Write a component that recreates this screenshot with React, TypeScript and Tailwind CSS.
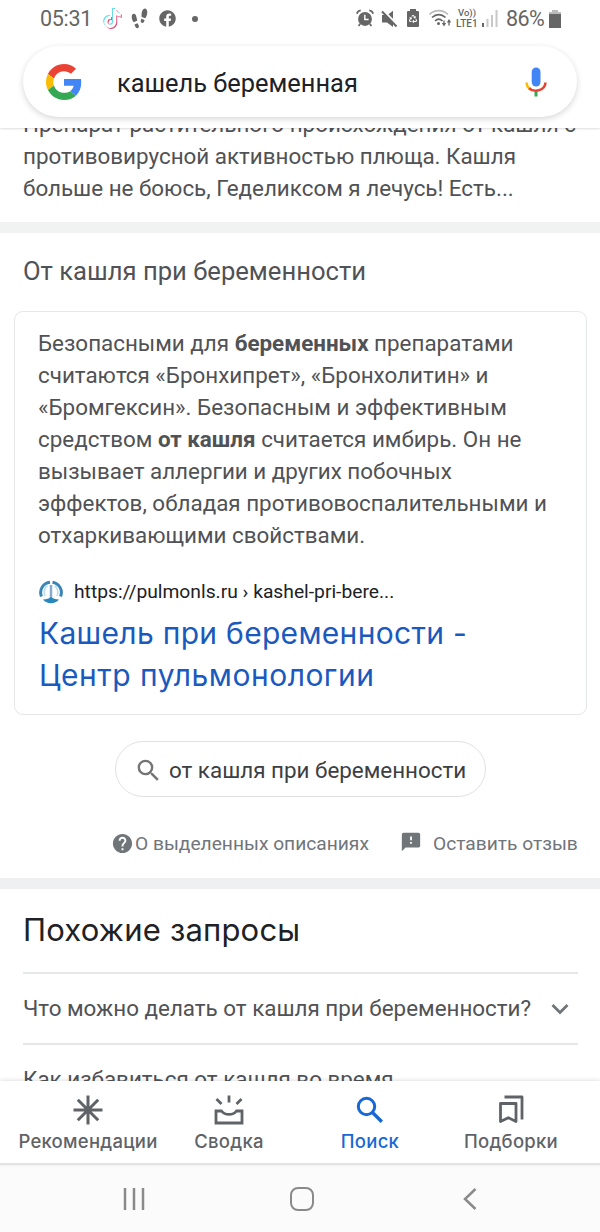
import React from 'react';
import { FaFacebook, FaRecycle, FaTiktok } from 'react-icons/fa';
import { MdFeedback, MdHelp, MdSearch } from 'react-icons/md';

const RELATED = ['Что можно делать от кашля при беременности?', 'Как избавиться от кашля во время'];

export default function App() {
  return (
    <div className="flex h-[1232px] w-[600px] flex-col overflow-hidden bg-white font-['Roboto',sans-serif] text-[#505255]">
      <Header />
      <main className="flex min-h-0 flex-1 flex-col overflow-hidden">
        <p className="-mt-5 h-[114px] shrink-0 whitespace-nowrap pl-[23px] text-[22.4px] leading-8">
          <span className="block">Препарат растительного происхождения от кашля с</span>
          <span className="block">противовирусной активностью плюща. Кашля</span>
          <span className="block">больше не боюсь, Геделиксом я лечусь! Есть...</span>
        </p>
        <div className="h-[11px] shrink-0 bg-[#f1f2f2]" />
        <FeaturedSnippet />
        <div className="h-[11px] shrink-0 bg-[#eff0f2]" />
        <RelatedSearches />
      </main>
      <TabBar />
      <SystemNav />
    </div>
  );
}

const Header = () => (
  <header className="relative z-10 h-32 shrink-0 bg-white shadow-[0_1px_2px_rgba(0,0,0,0.14)]">
    <StatusBar />
    <div className="mx-[23px] mt-2 flex h-[71px] items-center rounded-full bg-white pl-[23px] pr-[30px] shadow-[0_2px_6px_rgba(0,0,0,0.16)]">
      <GoogleLogo />
      <span className="ml-[35px] flex-1 whitespace-nowrap pt-[2px] text-[25.4px] leading-8 text-[#202124]">кашель беременная</span>
      <MicIcon />
    </div>
  </header>
);

const StatusBar = () => (
  <div className="flex h-[38px] items-center pb-px pl-10 pr-[39px] text-[#666]">
    <span className="w-[62px] whitespace-nowrap pt-px text-[21.5px] leading-6 tracking-[-0.3px]">05:31</span>
    <TikTokIcon />
    <Footprints />
    <FaFacebook className="ml-[11px] size-[17px]" />
    <span className="ml-[16px] size-[6px] rounded-full bg-[#666]" />
    <div className="ml-auto flex items-center">
      <AlarmIcon />
      <MutedIcon />
      <RecycleBattery />
      <WifiIcon />
      <div className="ml-[4px] flex w-[24px] flex-col text-[9.5px] font-medium leading-[10px]">
        <span className="pl-[2px]">Vo))</span>
        <span className="whitespace-nowrap text-[10px] leading-[12px]">LTE1</span>
      </div>
      <SignalIcon />
      <span className="ml-2 w-[43px] whitespace-nowrap pt-px text-[21.5px] leading-6 tracking-[-0.6px]">86%</span>
      <svg className="h-[18px] w-[12px]" viewBox="0 0 12 18" fill="currentColor">
        <path d="M3 0h6v2h3v2H0V2h3z" fill="#bbb" />
        <path d="M0 4h12v14H0z" />
      </svg>
    </div>
  </div>
);

const TikTokIcon = () => (
  <span className="relative h-[22px] w-5 shrink-0">
    <FaTiktok className="absolute left-0 top-0 size-[19px] text-[#69dfe3]" />
    <FaTiktok className="absolute left-[1.5px] top-[2px] size-[19px] text-[#e0527a]" />
    <FaTiktok className="absolute left-[0.8px] top-[1px] size-[19px] text-white" />
  </span>
);

const Footprints = () => (
  <svg className="ml-[9px] h-[21px] w-[17px]" viewBox="0 0 17 21" fill="currentColor">
    <path d="M.8 8C1 5.500 4 5 5 7.500l1.300 5-3.500 1.800C1.300 12.500.5 10.500.8 8z" />
    <path d="M3.500 16.500l3-1.300c1.800 2.300 1.800 4.200.4 4.900-1.300.7-2.700-.9-3.400-3.600z" />
    <path d="M16.200 3.500C15.900.3 13.700-.2 12.300 1.200 10.900 2.700 10.500 5 10.500 7.500l.2 1.500 3.600 1.300c1.300-2 2.200-4.300 1.900-6.800z" />
    <path d="M10.300 10.700l3.300 1.200c-.4 2.400-1.500 3.400-2.800 2.900-1.400-.4-1.300-2.100-.5-4.100z" />
  </svg>
);

const AlarmIcon = () => (
  <svg className="h-[19px] w-[18px]" viewBox="0 0 19 19" fill="none">
    <circle cx="9.500" cy="10" r="7.300" fill="#666" />
    <path d="M1 4.500C1.500 2.500 3 1.200 5 1M18 4.500C17.500 2.500 16 1.200 14 1M4.500 15l-1.800 2.500M14.500 15l1.800 2.500" stroke="#666" strokeWidth="1.800" />
    <path d="M9.300 5.500v5h4" stroke="#fff" strokeWidth="1.500" />
  </svg>
);

const MutedIcon = () => (
  <svg className="ml-[7px] mr-px h-[18px] w-[17px]" viewBox="0 0 17 18" fill="currentColor">
    <path d="M1 5h3l8 8v4L6 12.500H1zM7.500 4.300L12 .7v8z" />
    <path d="M1 1.500l14.500 15" stroke="currentColor" strokeWidth="2" />
  </svg>
);

const RecycleBattery = () => (
  <span className="relative ml-[8px] mr-px mt-px flex h-[16px] w-[12px] items-center justify-center rounded-[1px] bg-[#666] text-white before:absolute before:-top-[2px] before:left-[3px] before:h-[2px] before:w-[6px] before:bg-[#666]">
    <FaRecycle className="size-[8px]" />
  </span>
);

const WifiIcon = () => (
  <svg className="ml-[9px] h-[19px] w-[23px]" viewBox="0 0 23 19" fill="none" stroke="#666" strokeWidth="1.700">
    <path d="M.5 5.500C5.500.2 14 .2 19 5.500" stroke="#bbb" />
    <path d="M3 8.500C7 4.700 12.500 4.700 16.500 8.500" />
    <path d="M6 12c2.300-2.200 5.200-2.200 7.500 0" />
    <circle cx="9.500" cy="14.500" r="1.500" fill="#666" stroke="none" />
    <path d="M15 11.500V16M20 16.500v-5" strokeWidth="1.300" />
    <path d="M12.800 14l2.200 3.500 2.200-3.500zM17.800 13.500L20 10l2.200 3.500z" fill="#666" stroke="none" />
  </svg>
);

const SignalIcon = () => (
  <svg className="ml-[2px] h-[17px] w-[16px]" viewBox="0 0 16 17">
    <path d="M0 13h2v4H0z" fill="#666" />
    <path d="M4.500 9h2v8h-2zM9 5h2v12H9zM13.500 0h2v17h-2z" fill="#c8c8c8" />
  </svg>
);

const GoogleLogo = () => (
  <svg className="size-[36px]" viewBox="0 0 48 48">
    <path fill="#EA4335" d="M24 9.500c3.540 0 6.710 1.220 9.210 3.600l6.850-6.850C35.900 2.380 30.470 0 24 0 14.620 0 6.510 5.380 2.560 13.220l7.980 6.190C12.430 13.720 17.740 9.500 24 9.500z" />
    <path fill="#4285F4" d="M46.980 24.550c0-1.570-.15-3.090-.38-4.550H24v9.020h12.940c-.58 2.960-2.260 5.480-4.780 7.180l7.730 6c4.510-4.180 7.090-10.360 7.090-17.650z" />
    <path fill="#FBBC05" d="M10.530 28.590c-.48-1.450-.76-2.990-.76-4.590s.27-3.140.76-4.590l-7.980-6.190C.92 16.460 0 20.120 0 24c0 3.880.92 7.540 2.560 10.780l7.970-6.190z" />
    <path fill="#34A853" d="M24 48c6.480 0 11.930-2.130 15.890-5.810l-7.730-6c-2.150 1.450-4.920 2.300-8.160 2.300-6.260 0-11.570-4.220-13.470-9.910l-7.980 6.190C6.510 42.620 14.620 48 24 48z" />
  </svg>
);

const MicIcon = () => (
  <svg className="mt-px h-[30px] w-[22px]" viewBox="0 0 22 30" fill="none">
    <rect x="6.700" y="0.500" width="8.800" height="19" rx="4.400" fill="#4285F4" />
    <path d="M11 24v5.500" stroke="#34A853" strokeWidth="3" />
    <path d="M1.500 15.500c.2 2.600 1.300 4.800 3 6.300" stroke="#FBBC05" strokeWidth="2.600" />
    <path d="M4.100 21.200C8.500 25.500 19.800 24.500 20.500 15.500" stroke="#EA4335" strokeWidth="2.600" />
  </svg>
);

const FeaturedSnippet = () => (
  <section className="flex h-[645px] shrink-0 flex-col">
    <h2 className="mt-[22px] whitespace-nowrap pl-[23px] text-[25.6px] leading-8">От кашля при беременности</h2>
    <div className="ml-[14px] mt-[24px] h-[404px] w-[573px] shrink-0 rounded-[9px] border-[1.5px] border-[#e6e7e9] pl-[23px] pt-[14.5px]">
      <p className="whitespace-nowrap text-[22.4px] leading-8">
        <span className="block">Безопасными для <b>беременных</b> препаратами</span>
        <span className="block">считаются «Бронхипрет», «Бронхолитин» и</span>
        <span className="block">«Бромгексин». Безопасным и эффективным</span>
        <span className="block">средством <b>от кашля</b> считается имбирь. Он не</span>
        <span className="block">вызывает аллергии и других побочных</span>
        <span className="block">эффектов, обладая противовоспалительными и</span>
        <span className="block">отхаркивающими свойствами.</span>
      </p>
      <div className="mt-[29.5px] flex h-6 items-center">
        <SiteIcon />
        <span className="ml-[10px] whitespace-nowrap text-[19.25px] leading-6 text-[#202124]">https://pulmonls.ru › kashel-pri-bere...</span>
      </div>
      <a className="mt-[8px] block whitespace-nowrap pl-px font-['Inter',sans-serif] text-[30px] leading-[42px] tracking-[0.3px] text-[#1a59be]">
        <span className="block">Кашель при беременности -</span>
        <span className="block tracking-[0.5px]">Центр пульмонологии</span>
      </a>
    </div>
    <div className="ml-[115px] mt-[26px] flex h-[56px] w-[371px] shrink-0 items-center rounded-full border-[1.5px] border-[#dfe1e5] pl-[18px] text-[#3c4043]">
      <MdSearch className="mt-[3px] size-[29px] text-[#757575]" />
      <span className="ml-[6px] whitespace-nowrap pt-[2px] text-[22.4px] leading-8">от кашля при беременности</span>
    </div>
    <div className="mt-[34px] flex h-6 items-center whitespace-nowrap pl-[111px] text-[19.2px] leading-6 text-[#70757a]">
      <MdHelp className="size-[23px]" />
      <span className="w-[266px] pl-px pt-[2px]">О выделенных описаниях</span>
      <MdFeedback className="mt-[-3px] size-[22px]" />
      <span className="ml-[11px] pt-[2px]">Оставить отзыв</span>
    </div>
  </section>
);

const SiteIcon = () => (
  <svg className="size-[26px]" viewBox="0 0 26 26" fill="none">
    <path d="M3.500 17.500A10.300 10.300 0 0 1 12 3.200M14.500 3.200A10.300 10.300 0 0 1 22.500 17.500" stroke="#3b86b6" strokeWidth="3" />
    <path d="M7 17C5 12 7 8 9.500 7M19 17c2-5 0-9-2.500-10" stroke="#b5dcf0" strokeWidth="1.500" />
    <path d="M13 6v15" stroke="#86abcd" strokeWidth="2.500" />
    <path d="M5 20.500c4 0 6-1 8-2.500 2 1.500 4 2.500 8 2.500-4 5-12 5-16 0z" fill="#2787bd" />
  </svg>
);

const RelatedSearches = () => (
  <section className="shrink-0 pl-[23px] pr-[22px]">
    <h2 className="flex h-[83px] items-center whitespace-nowrap font-['Inter',sans-serif] text-[31px] tracking-[0.2px] text-[#202124]">Похожие запросы</h2>
    {RELATED.map((q, i) => (
      <div key={q} className="flex h-[71px] items-center justify-between border-t-2 border-[#e6e7e8]">
        <span className="-mt-[2px] whitespace-nowrap text-[22.4px] leading-8">{q}</span>
        {i === 0 && (
          <svg className="mr-[9px] h-3 w-[18px]" viewBox="0 0 18 12" fill="none" stroke="#70757a" strokeWidth="2.800">
            <path d="M1.500 2L9 9.500 16.500 2" />
          </svg>
        )}
      </div>
    ))}
  </section>
);

const TabBar = () => (
  <nav className="relative z-10 flex h-[84px] shrink-0 border-b-2 border-[#e3e3e3] bg-white pl-[17px] font-['Inter',sans-serif] text-[18.5px] font-medium tracking-[0.25px] text-[#5f6368] shadow-[0_-1px_4px_rgba(0,0,0,0.12)]">
    <Tab label="Рекомендации">
      <path d="M15 .5v29M.5 15h29M4.800 4.800l20.400 20.400M25.200 4.800L4.800 25.200" strokeWidth="3" />
    </Tab>
    <Tab label="Сводка">
      <path d="M2 16h5.500c3.500 4.500 11.500 4.500 15 0H28v12H2zM15 .5v7M2.500 4l5 5M27.500 4l-5 5" strokeWidth="2.800" />
    </Tab>
    <Tab label="Поиск" active>
      <circle cx="11.500" cy="11.500" r="8.200" strokeWidth="3" />
      <path d="M17.500 17.500l9.300 9.300" strokeWidth="3.400" />
    </Tab>
    <Tab label="Подборки">
      <path d="M4.500 8.500h15.500v18l-7.700-3.800-7.800 3.800zM8.500 2h17.500v22.500" strokeWidth="2.800" strokeLinejoin="round" />
    </Tab>
  </nav>
);

const Tab = ({ label, active, children }: { label: string; active?: boolean; children: React.ReactNode }) => (
  <div className={`flex w-[141px] shrink-0 flex-col items-center pt-[14px] ${active ? 'text-[#1967d2]' : ''}`}>
    <svg className="size-[30px]" viewBox="0 0 30 30" fill="none" stroke="currentColor">
      {children}
    </svg>
    <span className="mt-[4px] whitespace-nowrap pl-px leading-6">{label}</span>
  </div>
);

const SystemNav = () => (
  <div className="flex h-[67px] shrink-0 items-center bg-[#fbfbfb] pl-[123px] pt-px text-[#8a8a8a]">
    <svg className="h-[24px] w-[22px]" viewBox="0 0 22 24" stroke="currentColor" strokeWidth="2.500">
      <path d="M2 1v22M11 1v22M20 1v22" />
    </svg>
    <span className="ml-[145px] size-[24px] rounded-[8px] border-[2.5px] border-current" />
    <svg className="ml-[149px] h-[24px] w-[14px]" viewBox="0 0 14 24" fill="none" stroke="currentColor" strokeWidth="2.500">
      <path d="M12.500 2L2 12l10.500 10" />
    </svg>
  </div>
);
